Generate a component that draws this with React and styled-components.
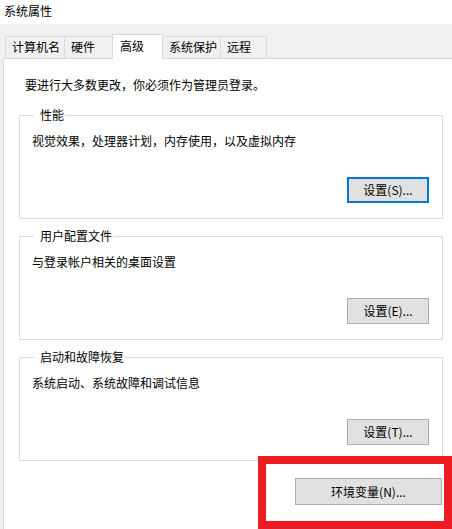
import React from "react";
import styled, { createGlobalStyle } from "styled-components";

const GlobalStyle = createGlobalStyle`
  html, body {
    margin: 0;
    padding: 0;
    background: #ffffff;
  }
  body {
    font-family: "Noto Sans CJK SC", "Microsoft YaHei UI", sans-serif;
    font-size: 12px;
    color: #000000;
  }
  * { box-sizing: border-box; }
`;

const Window = styled.div`
  position: relative;
  width: 452px;
  height: 529px;
  overflow: hidden;
  background: #f0f0f0;
  display: flex;
  flex-direction: column;
`;

const TitleBar = styled.div`
  height: 24px;
  background: #ffffff;
  padding-left: 4px;
  line-height: 21px;
  font-size: 12px;
`;

const TabStrip = styled.div`
  height: 35px;
  margin-bottom: -1px;
  padding-left: 5px;
  display: flex;
  align-items: flex-end;
  position: relative;
  z-index: 1;
`;

const Tab = styled.div`
  width: ${(p) => p.$w}px;
  height: ${(p) => (p.$active ? 25 : 22)}px;
  margin-bottom: ${(p) => (p.$active ? 0 : 1)}px;
  margin-left: ${(p) => (p.$first ? 0 : -1)}px;
  padding-left: ${(p) => (p.$active ? 7 : 6)}px;
  border: 1px solid #d9d9d9;
  border-bottom: none;
  background: ${(p) => (p.$active ? "#ffffff" : "#f0f0f0")};
  line-height: ${(p) => (p.$active ? 21 : 20)}px;
  white-space: nowrap;
  position: relative;
  z-index: ${(p) => (p.$active ? 2 : 1)};
`;

const Panel = styled.div`
  flex: 1;
  margin-left: 3px;
  background: #ffffff;
  border-top: 1px solid #d9d9d9;
  border-left: 1px solid #d9d9d9;
  padding-top: 18px;
  display: flex;
  flex-direction: column;
`;

const Intro = styled.div`
  padding-left: 21px;
  line-height: 16px;
`;

const Group = styled.fieldset`
  margin: ${(p) => (p.$first ? 14 : 9)}px 9px 0 15px;
  padding: 0 13px 15px 12px;
  border: 1px solid #dcdcdc;
  min-width: 0;
`;

const Legend = styled.legend`
  margin-left: 2px;
  padding: 0 1px 0 6px;
  line-height: 16px;
  font-size: 12px;
`;

const Desc = styled.div`
  margin-top: 10px;
  line-height: 16px;
`;

const ButtonRow = styled.div`
  display: flex;
  justify-content: flex-end;
  margin-top: ${(p) => p.$top}px;
  margin-right: ${(p) => p.$right || 0}px;
`;

const Button = styled.button`
  width: ${(p) => p.$w}px;
  height: ${(p) => p.$h || 26}px;
  padding: 0;
  font-family: inherit;
  font-size: 12px;
  color: #000000;
  background: #e1e1e1;
  border: ${(p) => (p.$focused ? "2px solid #0078d7" : "1px solid #adadad")};
  border-radius: 0;
  line-height: 16px;
  cursor: default;
`;

const Highlight = styled.div`
  position: absolute;
  left: 258px;
  top: 456px;
  width: 194px;
  height: 73px;
  border: 8px solid #ed1c24;
  pointer-events: none;
`;

const tabs = [
  { label: "计算机名", w: 60 },
  { label: "硬件", w: 49 },
  { label: "高级", w: 51, active: true },
  { label: "系统保护", w: 59 },
  { label: "远程", w: 47 },
];

const groups = [
  { title: "性能", desc: "视觉效果，处理器计划，内存使用，以及虚拟内存", button: "设置(S)...", focused: true },
  { title: "用户配置文件", desc: "与登录帐户相关的桌面设置", button: "设置(E)..." },
  { title: "启动和故障恢复", desc: "系统启动、系统故障和调试信息", button: "设置(T)..." },
];

export default function App() {
  return (
    <>
      <GlobalStyle />
      <Window>
        <TitleBar>系统属性</TitleBar>
        <TabStrip>
          {tabs.map((t, i) => (
            <Tab key={t.label} $w={t.w} $active={t.active} $first={i === 0}>
              {t.label}
            </Tab>
          ))}
        </TabStrip>
        <Panel>
          <Intro>要进行大多数更改，你必须作为管理员登录。</Intro>
          {groups.map((g, i) => (
            <Group key={g.title} $first={i === 0}>
              <Legend>{g.title}</Legend>
              <Desc>{g.desc}</Desc>
              <ButtonRow $top={28}>
                <Button $w={82} $focused={g.focused}>{g.button}</Button>
              </ButtonRow>
            </Group>
          ))}
          <ButtonRow $top={17} $right={10}>
            <Button $w={147} $h={27}>环境变量(N)...</Button>
          </ButtonRow>
        </Panel>
        <Highlight />
      </Window>
    </>
  );
}
